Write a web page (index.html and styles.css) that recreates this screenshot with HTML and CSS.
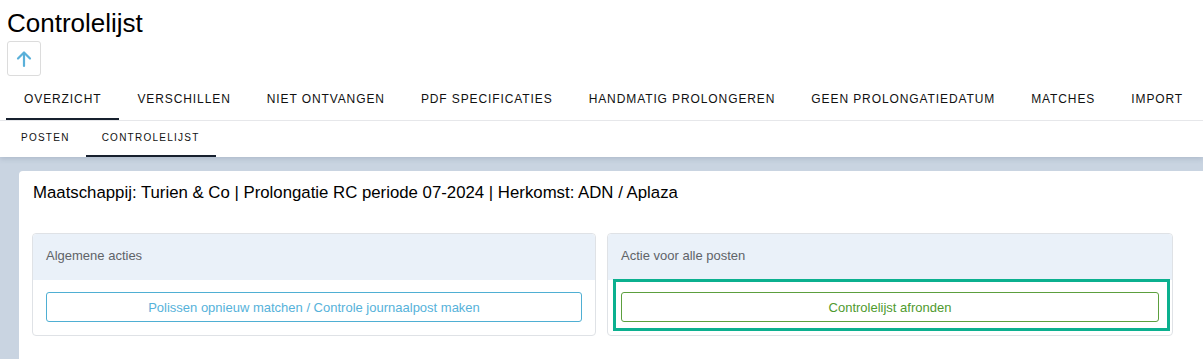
FILE: index.html
```html
<!DOCTYPE html>
<html lang="nl">
<head>
  <meta charset="UTF-8">
  <meta name="viewport" content="width=device-width, initial-scale=1.0">
  <title>Controlelijst</title>
  <link rel="stylesheet" href="styles.css">
</head>
<body>
  <div class="page-header">
    <h1>Controlelijst</h1>
    <button class="up-button" title="Omhoog">
      <svg width="16" height="18" viewBox="0 0 16 18" fill="none" stroke="#5ab0d9" stroke-width="2.2" stroke-linecap="round" stroke-linejoin="round">
        <path d="M8 16V3"/>
        <path d="M2 8.5L8 2.5L14 8.5"/>
      </svg>
    </button>
    <nav class="main-tabs">
      <a class="tab active">Overzicht</a>
      <a class="tab">Verschillen</a>
      <a class="tab">Niet ontvangen</a>
      <a class="tab">PDF specificaties</a>
      <a class="tab">Handmatig prolongeren</a>
      <a class="tab">Geen prolongatiedatum</a>
      <a class="tab">Matches</a>
      <a class="tab">Import</a>
    </nav>
    <nav class="sub-tabs">
      <a class="sub-tab">Posten</a>
      <a class="sub-tab active">Controlelijst</a>
    </nav>
  </div>

  <div class="content">
    <div class="card">
      <p class="card-title">Maatschappij: Turien &amp; Co | Prolongatie RC periode 07-2024 | Herkomst: ADN / Aplaza</p>
      <div class="panels">
        <div class="panel">
          <div class="panel-header">Algemene acties</div>
          <div class="panel-body">
            <button class="action-button info">Polissen opnieuw matchen / Controle journaalpost maken</button>
          </div>
        </div>
        <div class="panel">
          <div class="panel-header">Actie voor alle posten</div>
          <div class="panel-body highlighted">
            <button class="action-button success">Controlelijst afronden</button>
          </div>
        </div>
      </div>
    </div>
  </div>
</body>
</html>
```

FILE: styles.css
```css
body {
  font-family: "Liberation Sans", Arial, sans-serif;
  margin: 0;
  padding: 0;
  background-color: white;
  color: #000;
  overflow: hidden;
}

.page-header {
  position: relative;
  z-index: 1;
  background-color: white;
  padding-top: 8px;
  box-shadow: 0 2px 5px rgba(60, 80, 110, 0.18);
}

h1 {
  font-size: 26px;
  font-weight: normal;
  line-height: 30px;
  margin: 0 0 0 7px;
}

.up-button {
  display: flex;
  align-items: center;
  justify-content: center;
  width: 34px;
  height: 35px;
  margin: 3px 0 0 7px;
  padding: 0;
  background-color: white;
  border: 1px solid #dcdcdc;
  border-radius: 3px;
  cursor: pointer;
}

.main-tabs {
  display: flex;
  margin-top: 4px;
  padding-left: 6px;
  border-bottom: 1px solid #e6e7ea;
}

.tab {
  height: 38px;
  line-height: 38px;
  padding: 0 18px;
  font-size: 12px;
  letter-spacing: 0.9px;
  text-transform: uppercase;
  color: #111;
  border-bottom: 2px solid transparent;
  white-space: nowrap;
  cursor: pointer;
}

.tab.active {
  border-bottom-color: #17202e;
}

.sub-tabs {
  display: flex;
  padding-left: 5px;
}

.sub-tab {
  height: 34px;
  line-height: 34px;
  padding: 0 16px;
  font-size: 10px;
  letter-spacing: 1.25px;
  text-transform: uppercase;
  color: #111;
  border-bottom: 2px solid transparent;
  cursor: pointer;
}

.sub-tab.active {
  border-bottom-color: #17202e;
}

.content {
  background-color: #c9d4e1;
  padding: 14px 0 0 19px;
  height: 188px;
}

.card {
  background-color: white;
  border-radius: 4px 0 0 0;
  padding: 13px 0 0 13px;
  height: 100%;
}

.card-title {
  font-size: 16.8px;
  line-height: 18px;
  margin: 0 0 31px 1px;
}

.panels {
  display: grid;
  grid-template-columns: 564px 566px;
  gap: 11px;
}

.panel {
  border: 1px solid #dfe2e6;
  border-radius: 4px;
}

.panel-header {
  height: 46px;
  line-height: 44px;
  padding: 0 13px;
  background-color: #eaf1f9;
  border-radius: 4px 4px 0 0;
  font-size: 13px;
  color: #5f6368;
}

.panel-body {
  position: relative;
  padding: 12px 13px 13px;
}

.panel-body.highlighted::after {
  content: "";
  position: absolute;
  top: -1px;
  left: 5px;
  right: 2px;
  bottom: 4px;
  border: 3px solid #0bb08f;
  pointer-events: none;
}

.action-button {
  display: block;
  width: 100%;
  height: 30px;
  font-family: "Liberation Sans", Arial, sans-serif;
  font-size: 13px;
  background-color: white;
  border-radius: 3px;
  cursor: pointer;
}

.action-button.info {
  color: #56b2da;
  border: 1px solid #4fafd3;
}

.action-button.success {
  color: #4f9a2e;
  border: 1px solid #5c9f3e;
}
```
